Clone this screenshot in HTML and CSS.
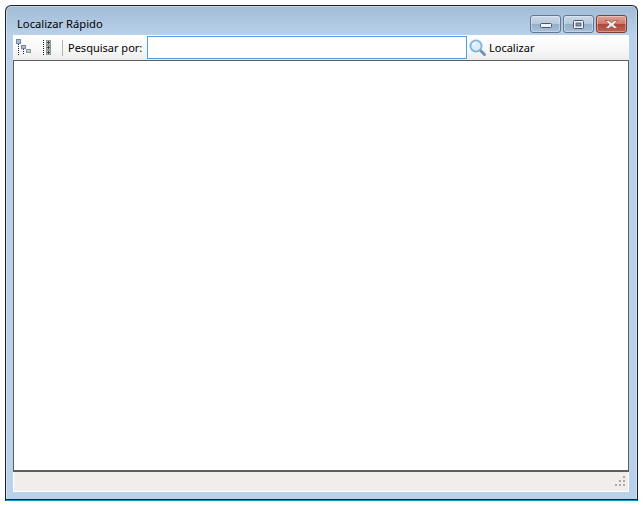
FILE: index.html
```html
<!DOCTYPE html>
<html lang="pt">
<head>
  <meta charset="UTF-8">
  <title>Localizar Rápido</title>
  <link rel="stylesheet" href="styles.css">
</head>
<body>
  <div class="window">
    <div class="title-bar">
      <span class="title">Localizar Rápido</span>
      <div class="window-buttons">
        <div class="win-btn">
          <svg class="min-glyph" width="12" height="6" viewBox="0 0 12 6"><rect x="0.5" y="0.5" width="11" height="4" rx="1" fill="#eef1f5" stroke="#47586c"/></svg>
        </div>
        <div class="win-btn">
          <svg width="11" height="9" viewBox="0 0 11 9"><rect x="0.5" y="0.5" width="10" height="8" rx="1" fill="#eef1f5" stroke="#47586c"/><rect x="3" y="3" width="5" height="3" fill="#7f97b2" stroke="#47586c" stroke-width="0.8"/></svg>
        </div>
        <div class="win-btn win-btn-close">
          <svg width="15" height="9" viewBox="0 0 15 9"><path d="M1 0.5H4.5L7.5 2.6L10.5 0.5H14L9.8 4.5L14 8.5H10.5L7.5 6.4L4.5 8.5H1L5.2 4.5Z" fill="#f2ecea" stroke="#7a4a43" stroke-width="0.7"/></svg>
        </div>
      </div>
    </div>
    <div class="client">
      <div class="toolbar">
        <button class="tool-icon">
          <svg width="16" height="17" viewBox="0 0 16 17">
            <path d="M2.5 5V16M7.5 10V16" stroke="#222" stroke-dasharray="1 1" fill="none"/>
            <rect x="0.5" y="0.5" width="4" height="4" fill="#a9bccd" stroke="#6f8aa4"/>
            <rect x="5.5" y="6.5" width="4" height="3" fill="#a9bccd" stroke="#6f8aa4"/>
            <rect x="10.5" y="10.5" width="4" height="3" fill="#c4c8c4" stroke="#8e9a96"/>
          </svg>
        </button>
        <button class="tool-icon">
          <svg width="10" height="16" viewBox="0 0 10 16">
            <path d="M1.5 0V15" stroke="#222" stroke-dasharray="1 1" fill="none"/>
            <rect x="4.5" y="0.5" width="4" height="4" fill="#c9cdc9" stroke="#8e9a96"/>
            <rect x="4.5" y="5.5" width="4" height="4" fill="#c9cdc9" stroke="#8e9a96"/>
            <rect x="4.5" y="10.5" width="4" height="4" fill="#c9cdc9" stroke="#8e9a96"/>
            <path d="M5 2.5H8M6.5 1V4M5 7.5H8M6.5 6V9M5 12.5H8M6.5 11V14" stroke="#444" fill="none"/>
          </svg>
        </button>
        <div class="separator"></div>
        <label class="search-label" for="search">Pesquisar por:</label>
        <input class="search-input" id="search" type="text">
        <button class="find-button">
          <svg width="18" height="18" viewBox="0 0 18 18">
            <path d="M11.5 11.5L15.5 15.5" stroke="#6d92b8" stroke-width="3" stroke-linecap="round"/>
            <circle cx="7" cy="7" r="5.6" fill="#dcedf9" stroke="#7db2de" stroke-width="1.8"/>
            <path d="M4 6.5A3.2 3.2 0 0 1 7 4" stroke="#fff" stroke-width="1.2" fill="none"/>
          </svg>
          Localizar
        </button>
      </div>
      <div class="results"></div>
      <div class="status-bar">
        <svg class="grip" width="11" height="11" viewBox="0 0 11 11" fill="#a8a8a8">
          <rect x="8" y="0" width="2" height="2"/>
          <rect x="4" y="4" width="2" height="2"/>
          <rect x="8" y="4" width="2" height="2"/>
          <rect x="0" y="8" width="2" height="2"/>
          <rect x="4" y="8" width="2" height="2"/>
          <rect x="8" y="8" width="2" height="2"/>
        </svg>
      </div>
    </div>
  </div>
</body>
</html>
```

FILE: styles.css
```css
* {
  margin: 0;
  padding: 0;
  box-sizing: border-box;
}

body {
  background-color: #fff;
  font-family: "Noto Sans", sans-serif;
  font-size: 11px;
  color: #000;
  padding: 5px 6px 4px 5px;
  height: 505px;
  overflow: hidden;
}

.window {
  height: 496px;
  display: flex;
  flex-direction: column;
  border: 1px solid #222;
  border-bottom-color: #0d9cc0;
  border-radius: 6px 6px 0 0;
  background: linear-gradient(180deg, #a3bcd5 0px, #b9d1ea 30px, #b9d2ec 100%);
  padding: 0 8px 8px 7px;
  box-shadow: inset 0 -1px 0 #222, inset 0 0 0 1px rgba(255, 255, 255, 0.35);
}

.title-bar {
  height: 29px;
  display: flex;
  justify-content: space-between;
  align-items: flex-start;
}

.title {
  margin: 10px 0 0 4px;
  font-size: 11.2px;
}

.window-buttons {
  display: flex;
  gap: 2px;
  margin: 9px 2px 0 0;
}

.win-btn {
  width: 31px;
  height: 18px;
  display: flex;
  align-items: center;
  justify-content: center;
  border: 1px solid #62778f;
  border-radius: 3px;
  background: linear-gradient(180deg, #ccd9e8 0%, #b6c9dd 48%, #96afc9 52%, #a8c0d8 100%);
  box-shadow: inset 0 0 0 1px rgba(255, 255, 255, 0.35);
}

.min-glyph {
  margin-top: 4px;
}

.win-btn-close {
  border-color: #7a4038;
  background: linear-gradient(180deg, #dfa094 0%, #d07a6c 48%, #b2483a 52%, #c26353 100%);
}

.client {
  flex: 1;
  display: flex;
  flex-direction: column;
  min-height: 0;
}

.toolbar {
  height: 25px;
  display: flex;
  align-items: center;
  background: linear-gradient(180deg, #fff 0%, #f7f7f7 60%, #ececec 100%);
}

.tool-icon {
  width: 26px;
  height: 22px;
  display: flex;
  align-items: center;
  padding-left: 3px;
  border: none;
  background: none;
}

.separator {
  width: 1px;
  height: 16px;
  margin: 0 5px 0 -3px;
  background-color: #b4b4b4;
}

.search-label {
  width: 74px;
  margin-right: 5px;
  white-space: nowrap;
}

.search-input {
  width: 320px;
  height: 23px;
  border: 1px solid #4c9fe6;
  outline: none;
  background-color: #fff;
}

.find-button {
  display: flex;
  align-items: center;
  gap: 2px;
  margin-left: 2px;
  border: none;
  background: none;
  font: inherit;
  color: inherit;
}

.results {
  flex: 1;
  background-color: #fff;
  border: 1px solid #5e5e5e;
  border-bottom-width: 2px;
}

.status-bar {
  height: 20px;
  display: flex;
  align-items: center;
  justify-content: flex-end;
  padding-right: 2px;
  background-color: #f0edec;
  border-bottom: 1px solid #fff;
  border-right: 1px solid #fff;
  border-left: 1px solid #fff;
}
```
